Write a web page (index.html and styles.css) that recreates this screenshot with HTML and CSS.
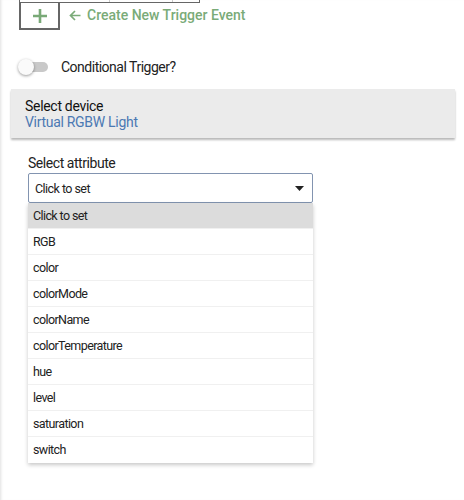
FILE: index.html
```html
<!DOCTYPE html>
<html lang="en">
<head>
  <meta charset="UTF-8">
  <meta name="viewport" content="width=device-width, initial-scale=1.0">
  <title>Trigger Events</title>
  <link rel="stylesheet" href="styles.css">
</head>
<body>
  <div class="page">

    <!-- Trigger table (last row only visible) -->
    <div class="trigger-table">
      <div class="trigger-row">
        <span class="cell cell-name">Trigger Event</span>
        <span class="cell cell-state">Disabled</span>
        <span class="cell cell-icon">&#x25A1;</span>
      </div>
    </div>

    <div class="add-row">
      <button class="add-btn">
        <svg width="16" height="16" viewBox="0 0 16 16">
          <path d="M8 1v14M1 8h14" stroke="#79a977" stroke-width="2.6" fill="none"/>
        </svg>
      </button>
      <svg class="add-arrow" width="12" height="11" viewBox="0 0 12 11">
        <path d="M11.5 5.5H1.5M6 1L1.5 5.5L6 10" stroke="#7aab78" stroke-width="1.7" fill="none"/>
      </svg>
      <span class="add-label">Create New Trigger Event</span>
    </div>

    <!-- Switch -->
    <label class="toggle-row">
      <span class="toggle"><span class="knob"></span></span>
      <span class="toggle-text">Conditional Trigger?</span>
    </label>

    <!-- Device picker -->
    <div class="device-box">
      <div class="device-title">Select device</div>
      <div class="device-value">Virtual RGBW Light</div>
    </div>

    <!-- Attribute picker -->
    <div class="attr">
      <div class="attr-label">Select attribute</div>
      <div class="select">
        <span>Click to set</span>
        <svg width="9" height="5" viewBox="0 0 9 5"><path d="M0 0h9L4.5 5z" fill="#222"/></svg>
      </div>
      <ul class="options">
        <li class="selected">Click to set</li>
        <li>RGB</li>
        <li>color</li>
        <li>colorMode</li>
        <li>colorName</li>
        <li>colorTemperature</li>
        <li>hue</li>
        <li>level</li>
        <li>saturation</li>
        <li>switch</li>
      </ul>
    </div>

  </div>
</body>
</html>
```

FILE: styles.css
```css
body {
  margin: 0;
  background: #fff;
  font-family: Roboto, "Noto Sans", sans-serif;
  color: #222;
}

.page {
  height: 500px;
  box-shadow: inset 3px 0 3px -2px rgba(0, 0, 0, 0.12);
  overflow: hidden;
}

/* Table of existing triggers */
.trigger-table {
  margin-left: 19px;
  width: 181px;
  height: 3px;
  overflow: hidden;
}

.trigger-row {
  display: flex;
  height: 27px;
  margin-top: -26px;
  border: 1px solid #666;
  border-bottom-width: 2px;
  color: #999;
  font-size: 14px;
}

.cell {
  display: flex;
  align-items: flex-end;
  padding: 0 6px 1px;
  border-right: 1px solid #ccc;
}

.cell-name { width: 77px; }
.cell-state { width: 50px; }
.cell-icon { border-right: none; }

.add-row {
  display: flex;
  align-items: center;
  margin-left: 19px;
}

.add-btn {
  width: 41px;
  height: 27px;
  background: #fff;
  border: 2px solid #666;
  border-top: none;
  padding: 0;
  display: flex;
  justify-content: center;
  align-items: center;
}

.add-arrow {
  margin-left: 9px;
  margin-top: -3px;
}

.add-label {
  margin-left: 6px;
  color: #7aab78;
  font-size: 14px;
  font-weight: 500;
  margin-top: -3px;
}

/* Switch row */
.toggle-row {
  display: flex;
  align-items: center;
  margin: 23px 0 0 19px;
  height: 28px;
}

.toggle {
  position: relative;
  width: 27px;
  height: 10px;
  border-radius: 5px;
  background: #c9c9c9;
  margin-left: 2px;
}

.knob {
  position: absolute;
  left: -3px;
  top: -3px;
  width: 16px;
  height: 16px;
  border-radius: 50%;
  background: #fafafa;
  box-shadow: 0 1px 3px rgba(0, 0, 0, 0.4);
}

.toggle-text {
  margin-left: 13px;
  font-size: 14px;
  letter-spacing: -0.5px;
  color: #222;
}

/* Device picker */
.device-box {
  margin: 8px 9px 0 11px;
  background: #ebebeb;
  padding: 9px 14px 7px;
  height: 33px;
  box-shadow: 0 2px 2px rgba(0, 0, 0, 0.28);
  font-size: 14px;
  letter-spacing: -0.3px;
}

.device-title {
  color: #111;
  line-height: 16px;
}

.device-value {
  color: #4b79b3;
  line-height: 17px;
}

/* Attribute picker */
.attr {
  margin: 17px 0 0 28px;
  width: 285px;
}

.attr-label {
  font-size: 14px;
  letter-spacing: -0.45px;
  line-height: 17px;
  margin-bottom: 1px;
  color: #222;
}

.select {
  height: 28px;
  border: 1px solid #8294b0;
  border-radius: 2px;
  display: flex;
  align-items: center;
  justify-content: space-between;
  padding: 0 8px 0 6px;
  font-size: 12.5px;
  letter-spacing: -0.55px;
}

.options {
  list-style: none;
  margin: 0;
  padding: 0;
  background: #fff;
  box-shadow: 0 2px 4px rgba(0, 0, 0, 0.22);
}

.options li {
  height: 25px;
  line-height: 25px;
  padding-left: 5px;
  font-size: 12.5px;
  letter-spacing: -0.6px;
  border-bottom: 1px solid #f0f0f0;
}

.options li:last-child {
  border-bottom: none;
  height: 26px;
}

.options .selected {
  background: #dcdcdc;
}
```
